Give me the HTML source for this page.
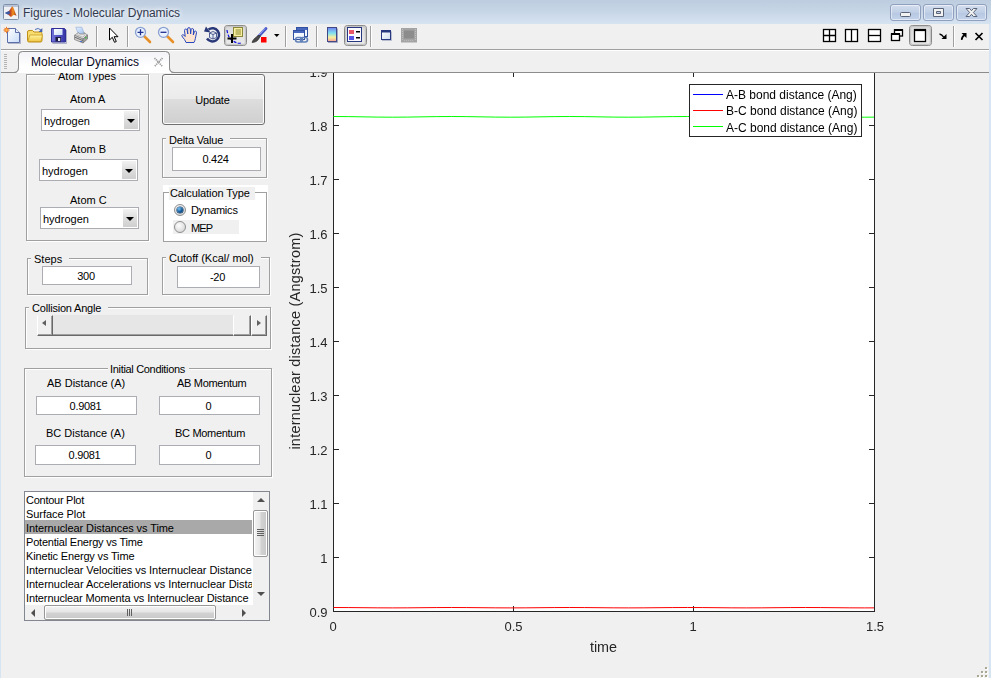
<!DOCTYPE html>
<html><head><meta charset="utf-8"><title>Figures - Molecular Dynamics</title>
<style>
html,body{margin:0;padding:0;}
body{width:991px;height:678px;overflow:hidden;position:relative;background:#f0f0f0;font-family:"Liberation Sans",sans-serif;font-size:11px;color:#000;}
.abs{position:absolute;}
#titlebar{left:0;top:0;width:991px;height:24px;background:linear-gradient(#bdccde,#c6d5e6 45%,#d6e3f1);}
#title{left:23px;top:6px;color:#323a50;font-size:12px;letter-spacing:-0.06px;text-shadow:0 0 4px #fff,0 0 6px #fff;white-space:nowrap;}
.wbtn{top:4px;height:15px;width:29px;border:1px solid #8f9fbd;border-radius:3px;background:linear-gradient(#d3deee,#c0cfe6 50%,#b6c7e2 51%,#c3d3ea);box-shadow:inset 0 0 0 1px rgba(255,255,255,.5);}
#frameL{left:0;top:24px;width:1px;height:654px;background:#d7e4f2;}
#frameR{left:989px;top:24px;width:2px;height:654px;background:#d7e4f2;}
#toolbar{left:1px;top:24px;width:988px;height:25px;background:#f0f0f0;}
#tbline{left:1px;top:49px;width:988px;height:1px;background:#a0a0a0;}
#tabbar{left:1px;top:50px;width:988px;height:22px;background:#f0f0f0;}
#tabline{left:1px;top:72px;width:988px;height:1px;background:#8c8c8c;}
.sep{top:28px;width:1px;height:19px;background:#a0a0a0;}
.lbl{white-space:nowrap;font-size:11px;line-height:13px;margin-top:1px;}
.panel{border:1px solid #a0a0a0;box-shadow:1px 1px 0 #fff, inset 1px 1px 0 #fff;box-sizing:border-box;}
.ptitle{background:#f0f0f0;white-space:nowrap;font-size:11px;line-height:13px;padding:0 7px 0 3px;margin-top:1px;}
.edit{background:#fff;border:1px solid #abadb3;box-sizing:border-box;text-align:center;font-size:11px;line-height:16px;letter-spacing:-0.3px;padding-right:2px;}
.combo{background:#fff;border:1px solid #abadb3;box-sizing:border-box;font-size:11px;}
.combo .arr{position:absolute;right:1px;top:1px;bottom:1px;width:14px;background:linear-gradient(#f2f2f2,#ddd 50%,#cfcfcf);}
.combo .arr:after{content:"";position:absolute;left:3px;top:8px;border:4px solid transparent;border-top:4px solid #000;border-bottom:none;}
.combo span{position:absolute;left:2px;top:5px;line-height:13px;}

.radio{width:12px;height:12px;border-radius:50%;box-sizing:border-box;border:1px solid #8e8f8f;background:radial-gradient(circle at 40% 35%,#fdfdfd,#dcdcdc 70%,#c9c9c9);}
.radio.on:after{content:"";position:absolute;left:2px;top:2px;width:6px;height:6px;border-radius:50%;background:radial-gradient(circle at 35% 30%,#7cc4f2,#17609f 50%,#08284e);box-shadow:0 0 0 .6px #143f70;}
.sbtn{background:#f0f0f0;box-sizing:border-box;border-right:1px solid #696969;border-bottom:1px solid #696969;border-top:1px solid #f0f0f0;border-left:1px solid #fff;box-shadow:inset -1px -1px 0 #a0a0a0;}
.sbtn i{position:absolute;top:4px;border:3.5px solid transparent;}
.sbtn i.tl{left:4px;border-right:4px solid #606060;border-left:none;}
.sbtn i.tr{left:5px;border-left:4px solid #606060;border-right:none;}
.li{height:14px;line-height:14px;font-size:11px;white-space:nowrap;padding-left:1px;}
.li.sel{background:#a9a9a9;box-shadow:0 -1px 0 #a9a9a9;height:13px;margin-bottom:1px;}
</style></head><body>
<div id="titlebar" class="abs"></div>
<div id="title" class="abs">Figures - Molecular Dynamics</div>
<div class="abs wbtn" style="left:890px"></div>
<div class="abs wbtn" style="left:923px"></div>
<div class="abs wbtn" style="left:956px"></div>
<div id="toolbar" class="abs"></div>
<div id="tbline" class="abs"></div>
<div id="tabbar" class="abs"></div>
<div id="tabline" class="abs"></div>
<div id="frameL" class="abs"></div>
<div id="frameR" class="abs"></div>
<svg class="abs" id="topsvg" style="left:0;top:0" width="991" height="73" viewBox="0 0 991 73">
<defs>
<linearGradient id="gPaper" x1="0" y1="0" x2="1" y2="1"><stop offset="0" stop-color="#ffffff"/><stop offset="1" stop-color="#c8dcf8"/></linearGradient>
<linearGradient id="gFolder" x1="0" y1="0" x2="0" y2="1"><stop offset="0" stop-color="#fff3a0"/><stop offset="1" stop-color="#f0c848"/></linearGradient>
<linearGradient id="gCbar" x1="0" y1="0" x2="0" y2="1"><stop offset="0" stop-color="#7080f0"/><stop offset="0.4" stop-color="#80e0f0"/><stop offset="0.7" stop-color="#f8f0a0"/><stop offset="1" stop-color="#f8a090"/></linearGradient>
<linearGradient id="gWin" x1="0" y1="0" x2="1" y2="1"><stop offset="0" stop-color="#ffffff"/><stop offset="1" stop-color="#d0dcf0"/></linearGradient>
<linearGradient id="gTab" x1="0" y1="0" x2="0" y2="1"><stop offset="0" stop-color="#f3f3f8"/><stop offset="0.7" stop-color="#ffffff"/><stop offset="1" stop-color="#ffffff"/></linearGradient>
<linearGradient id="gSel" x1="0" y1="0" x2="0" y2="1"><stop offset="0" stop-color="#dadada"/><stop offset="1" stop-color="#ececec"/></linearGradient>
<linearGradient id="gLogo" x1="0" y1="0" x2="1" y2="0"><stop offset="0" stop-color="#3050a0"/><stop offset="0.45" stop-color="#c04020"/><stop offset="0.7" stop-color="#f09020"/><stop offset="1" stop-color="#a03010"/></linearGradient>
<linearGradient id="gSave" x1="0" y1="0" x2="1" y2="0"><stop offset="0" stop-color="#7474dc"/><stop offset="1" stop-color="#3434a8"/></linearGradient><linearGradient id="gPaperB" x1="0" y1="0" x2="1" y2="1"><stop offset="0" stop-color="#e8f2ff"/><stop offset="1" stop-color="#9cc0f0"/></linearGradient>
</defs>
<!-- title icon -->
<g id="ticon">
<rect x="3.5" y="4.5" width="15" height="15" rx="1" fill="#eef0f4" stroke="#8090a8"/>
<rect x="4" y="5" width="14" height="2" fill="#b8c4d8"/>
<path d="M5 13 L9 11 L12 6.5 Q13 6 13.5 8 L16.5 16 Q15 14.5 13.5 15 L11 17 L8 14.5 Z" fill="url(#gLogo)"/>
<path d="M5 13 L9 11 L10.5 13 L8 14.5 Z" fill="#3a5aa8"/>
</g>
<!-- window buttons glyphs -->
<g id="wglyph" stroke="#5a6478" stroke-width="1" fill="#f2f2f2">
<rect x="900.5" y="12.5" width="10" height="4" rx="1"/>
<path d="M933.5 8.500h10v8h-10z M936.500 11.500v2h4v-2z" fill-rule="evenodd"/>
<path d="M966 8.500h3.600l1.900 2.200l1.900-2.200h3.600l-3.600 4l3.600 4h-3.600l-1.900-2.200l-1.900 2.200h-3.600l3.600-4z"/>
</g>
<!-- toolbar icons -->
<g id="tbicons">
<!-- new -->
<path d="M7.500 28.500h8l4 4v10h-12z" fill="url(#gPaper)" stroke="#5c6eaa"/>
<path d="M15.500 28.500v4h4" fill="#e8f0ff" stroke="#5c6eaa"/>
<path d="M8 43.500h12M20.500 33v11" stroke="#8890b0" stroke-width="1" fill="none" opacity=".6"/>
<g stroke="#e87828" stroke-width=".9"><path d="M6.500 26.800v6.400M3.300 30h6.400M4.300 27.800l4.400 4.400M8.700 27.800l-4.400 4.400"/></g>
<circle cx="6.500" cy="30" r="1.700" fill="#ffb848" stroke="#e86818" stroke-width=".7"/>
<!-- open -->
<path d="M27.500 40.500v-8.500q0-1.500 1.500-1.500h3.500l1.500 1.500h6.500q1.500 0 1.500 1.500v7q0 1.500-1.500 1.500h-11.500q-1.500 0-1.500-1.500z" fill="#f8dc70" stroke="#c09018"/>
<path d="M28 41l1.800-6h12.700l-1.500 6.500h-12z" fill="url(#gFolder)" stroke="#c89c20" stroke-width=".8"/>
<path d="M35 29.500q3.200-2.300 6 .5" fill="none" stroke="#5070b8" stroke-width="1"/>
<path d="M42.300 28v4h-3.600z" fill="#4060a8"/>
<!-- save -->
<path d="M51.500 28.500h13l1 1v12.500h-14z" fill="url(#gSave)" stroke="#303098"/>
<rect x="54" y="29" width="8.500" height="6" fill="url(#gPaper)"/>
<rect x="55.500" y="37" width="5.500" height="4.500" fill="#1c1c40"/>
<rect x="58" y="38" width="2.200" height="3" fill="#e8e8f4"/>
<path d="M66.500 30v13.500h-14" stroke="#7880a8" fill="none" opacity=".55"/>
<!-- print -->
<path d="M75.800 27.200h6l2.400 6.300h-6z" fill="url(#gPaperB)" stroke="#9ab0d8" stroke-width=".7"/>
<path d="M74.500 35.300l4-2.800l1 1.500h5l-.6-1.500l3.600 2.500l-4.500 4z" fill="#e6e6e6" stroke="#8c8c8c" stroke-width=".8"/>
<path d="M74.500 35.300l8.500 3.700v4l-8.500-3.500z" fill="#d0d0d0" stroke="#808080" stroke-width=".8"/>
<path d="M83 39l4.500-4v4l-4.500 4z" fill="#a0a0a0" stroke="#787878" stroke-width=".8"/>
<path d="M75 37.300l8 3.400" stroke="#6c6c6c" stroke-width="1"/>
<path d="M77 34.800l5.500 2.400l3-2.400" stroke="#a8a8a8" stroke-width=".8" fill="none"/>
<rect x="85" y="37" width="1.500" height="1.500" fill="#40c040"/>
<rect x="80" y="41" width="2" height="1" fill="#5070d0"/>
<!-- separators -->
<g fill="#a0a0a0"><rect x="96" y="26" width="1" height="21"/><rect x="127" y="26" width="1" height="21"/><rect x="285" y="26" width="1" height="21"/><rect x="316" y="26" width="1" height="21"/><rect x="370" y="26" width="1" height="21"/><rect x="953" y="26" width="1" height="21"/></g>
<g fill="#ffffff"><rect x="97" y="26" width="1" height="21"/><rect x="128" y="26" width="1" height="21"/><rect x="286" y="26" width="1" height="21"/><rect x="317" y="26" width="1" height="21"/><rect x="371" y="26" width="1" height="21"/><rect x="954" y="26" width="1" height="21"/></g>
<!-- pointer -->
<path d="M109.500 28v12l2.800-2.700l2.200 5l1.800-.8l-2.200-4.800h3.900z" fill="#fff" stroke="#000" stroke-width="1"/>
<!-- zoom in -->
<path d="M144 36l6 6" stroke="#e89028" stroke-width="2.600" stroke-linecap="round"/>
<circle cx="140.500" cy="32.300" r="5" fill="#eaf2ff" stroke="#8aa0d0" stroke-width="1.300"/>
<path d="M137.500 32.300h6M140.500 29.300v6" stroke="#203090" stroke-width="1.300"/>
<!-- zoom out -->
<path d="M167 36l6 6" stroke="#e89028" stroke-width="2.600" stroke-linecap="round"/>
<circle cx="163.500" cy="32.300" r="5" fill="#eaf2ff" stroke="#8aa0d0" stroke-width="1.300"/>
<path d="M160.500 32.300h6" stroke="#203090" stroke-width="1.300"/>
<!-- hand -->
<path d="M186 42.500q-1-3-3.500-5.500q-1.500-1.800 0-2.300q1.300-.3 2.700 1.800l-.7-6q0-1.500 1.200-1.500t1.500 1.500l.6 3.500l-.2-5q0-1.400 1.300-1.400t1.400 1.400l.3 5l.5-4.300q.2-1.300 1.300-1.200t1.200 1.500l-.3 5l1-3q.4-1.200 1.400-.9t.8 1.600q-.8 4-1.200 6t-1.300 3.800z" fill="#fde4d0" stroke="#2848c0" stroke-width="1"/>
<!-- rotate -->
<path d="M208.500 29.500a6.600 6.600 0 1 1-1.500 9" fill="none" stroke="#283878" stroke-width="2.500"/>
<path d="M204 31.500l6.500 1l-4.500-6z" fill="#283878"/>
<path d="M209.500 33l3.500-1.500l3.500 1.500v4.500l-3.500 1.500l-3.500-1.500z M209.500 33l3.500 1.500l3.500-1.500M213 34.500v4.500" fill="#e8eef8" stroke="#405088" stroke-width=".9"/>
<!-- datacursor (selected) -->
<rect x="224.500" y="25.500" width="22" height="20" rx="3" fill="url(#gSel)" stroke="#787878"/><rect x="225.500" y="26.500" width="20" height="18" rx="2" fill="none" stroke="#c6c6c6" stroke-width="1.400"/>
<path d="M227 30q1 8 6 11t8 2" fill="none" stroke="#1010e0" stroke-width="1.200" stroke-dasharray="3 1.500"/>
<rect x="233.500" y="27.500" width="9" height="9" fill="#f8f0a0" stroke="#8a8838"/>
<path d="M235.500 30h5.500M235.500 32h5.500M235.500 34h5.500" stroke="#8a8838" stroke-width="1"/>
<path d="M227.500 38.500h9M232 34v9" stroke="#000" stroke-width="2"/>
<!-- brush -->
<path d="M266 28.500l-7.500 8" stroke="#4858c8" stroke-width="2.800" stroke-linecap="round"/>
<path d="M265 28.500l-6 6.500" stroke="#a8b8f8" stroke-width=".9"/>
<path d="M259.500 35l-2 1l-3 2.500q-2 2-2.500 4q3 0 5-1.500q2-2 3.500-5z" fill="#484848" stroke="#282828" stroke-width=".6"/>
<rect x="261" y="37" width="5.500" height="5.500" fill="#ff0000"/>
<path d="M274 34h5.500l-2.750 3z" fill="#000"/>
<!-- link -->
<rect x="296.500" y="27.500" width="11" height="9" fill="#f4f8ff" stroke="#3050a0"/>
<rect x="297" y="28" width="10" height="2" fill="#4868c0"/>
<rect x="293.500" y="30.500" width="11" height="9" fill="#f4f8ff" stroke="#3050a0"/>
<rect x="294" y="31" width="10" height="2" fill="#4868c0"/>
<rect x="295.500" y="37.500" width="7" height="4.500" rx="2.200" fill="none" stroke="#6080b8" stroke-width="1.600"/>
<rect x="300.500" y="37.500" width="7" height="4.500" rx="2.200" fill="none" stroke="#6080b8" stroke-width="1.600"/>
<!-- colorbar -->
<rect x="327.500" y="27.500" width="9" height="14" fill="url(#gCbar)" stroke="#404888"/>
<path d="M328 42.500h9.500v-14" stroke="#8088b0" fill="none" opacity=".7"/>
<!-- legend (selected) -->
<rect x="344.500" y="25.500" width="22" height="20" rx="3" fill="url(#gSel)" stroke="#787878"/><rect x="345.500" y="26.500" width="20" height="18" rx="2" fill="none" stroke="#c6c6c6" stroke-width="1.400"/>
<rect x="347.500" y="27.500" width="14" height="14" fill="#fafaff" stroke="#283880"/>
<rect x="349" y="30" width="5" height="4" fill="#e85868"/>
<rect x="349" y="36" width="5" height="4" fill="#5858e8"/>
<rect x="356" y="31" width="4" height="1.500" fill="#000"/>
<rect x="356" y="37" width="4" height="1.500" fill="#000"/>
<!-- window -->
<rect x="381.500" y="30.500" width="9" height="9" fill="url(#gWin)" stroke="#283880"/>
<rect x="381" y="30" width="10" height="2.500" fill="#283880"/>
<path d="M382 40.500h9.500v-9" stroke="#9098b8" fill="none" opacity=".6"/>
<!-- film (disabled) -->
<rect x="401" y="28" width="16" height="14.500" fill="#a4a4a4"/>
<rect x="404" y="30.500" width="10" height="8" fill="#8c8c8c"/>
<path d="M402.500 29v12M415.500 29v12" stroke="#c0c0c0" stroke-width="1" stroke-dasharray="1 1"/>
<path d="M404 40.500h10" stroke="#b8b8b8" stroke-width="1" stroke-dasharray="1 1"/>
<!-- right: layout icons -->
<g fill="#fff" stroke="#000" stroke-width="1.300">
<rect x="823.500" y="29.500" width="12" height="12"/>
<path d="M829.500 29.500v12M823.500 35.500h12" fill="none"/>
<rect x="845.500" y="29.500" width="12" height="12"/>
<path d="M851.500 29.500v12" fill="none"/>
<rect x="868.500" y="29.500" width="12" height="12"/>
<path d="M868.500 35.500h12" fill="none"/>
<rect x="894.500" y="30" width="8" height="6"/>
<path d="M894 30h9" stroke-width="2"/>
<rect x="891.500" y="34" width="8" height="6.500"/>
<path d="M891 34h9" stroke-width="2"/>
</g>
<rect x="909.500" y="25.500" width="22" height="20" rx="3" fill="url(#gSel)" stroke="#787878"/><rect x="910.500" y="26.500" width="20" height="18" rx="2" fill="none" stroke="#c6c6c6" stroke-width="1.400"/>
<rect x="914.500" y="30" width="11" height="11.500" fill="#fff" stroke="#000" stroke-width="1.300"/>
<path d="M914 30h12" stroke="#000" stroke-width="2.200"/>
<!-- arrows -->
<path d="M939.500 34q2.500 .3 4.500 3.500" fill="none" stroke="#000" stroke-width="1.400"/>
<path d="M946.500 34v5h-5z" fill="#000"/>
<path d="M961.800 39.800q-.3-2.500 2.700-4.800" fill="none" stroke="#000" stroke-width="1.800"/>
<path d="M961.500 33h5v5z" fill="#000"/>
<path d="M975.500 33l7 7M982.500 33l-7 7" stroke="#000" stroke-width="1.700"/>
</g>
<!-- tab -->
<rect x="1" y="50" width="988" height="1" fill="#fff"/>
<path d="M1 72.500H14Q18.500 72.500 18.500 68V55.500Q18.500 51.500 22.500 51.500H165.500Q169.500 51.500 169.500 55.500V68Q169.500 72.500 174 72.500H989" fill="none" stroke="#8c8c8c" stroke-width="1"/>
<path d="M14 73Q18.500 73 18.500 68V55.500Q18.500 51.500 22.500 51.500H165.500Q169.500 51.500 169.500 55.500V68Q169.500 73 174 73z" fill="url(#gTab)"/>
<path d="M1 72.500H14Q18.500 72.500 18.500 68V55.500Q18.500 51.500 22.500 51.500H165.500Q169.500 51.500 169.500 55.500V68Q169.500 72.500 174 72.500H989" fill="none" stroke="#8c8c8c" stroke-width="1"/>
<g fill="#b4b4b4"><rect x="4" y="54" width="3" height="1"/><rect x="4" y="56" width="3" height="1"/><rect x="4" y="58" width="3" height="1"/><rect x="4" y="60" width="3" height="1"/><rect x="4" y="62" width="3" height="1"/><rect x="4" y="64" width="3" height="1"/><rect x="4" y="66" width="3" height="1"/><rect x="4" y="68" width="3" height="1"/></g>
<text x="31" y="65.500" font-family="Liberation Sans, sans-serif" font-size="12px" fill="#08081c">Molecular Dynamics</text>
<path d="M154.500 58l8 8.500M162.500 58l-8 8.500" stroke="#9a9a9a" stroke-width="1.700" stroke-dasharray="1.200 .8"/>
</svg>

<!--TAB-->
<div class="abs" id="content" style="left:0;top:73px;width:991px;height:605px;overflow:hidden"><div class="abs" style="left:0;top:-73px;width:991px;height:678px">
<!-- Atom Types panel -->
<div class="abs panel" style="left:26px;top:74px;width:123px;height:167px"></div>
<div class="abs ptitle" style="left:55px;top:69px;padding:0 4px 0 3px">Atom Types</div>
<div class="abs lbl" style="left:70px;top:92px;">Atom A</div>
<div class="abs combo" style="left:41px;top:109px;width:99px;height:22px"><span>hydrogen</span><div class="arr"></div></div>
<div class="abs lbl" style="left:70px;top:142px;">Atom B</div>
<div class="abs combo" style="left:39px;top:159px;width:99px;height:22px"><span>hydrogen</span><div class="arr"></div></div>
<div class="abs lbl" style="left:70px;top:193px;">Atom C</div>
<div class="abs combo" style="left:40px;top:207px;width:99px;height:22px"><span>hydrogen</span><div class="arr"></div></div>
<!-- Update button -->
<div class="abs" id="update" style="left:162px;top:74px;width:103px;height:51px;box-sizing:border-box;border:1px solid #707070;border-radius:3px;background:linear-gradient(#f2f2f2,#ebebeb 48%,#dddddd 50%,#cfcfcf);box-shadow:inset 0 0 0 1px #fcfcfc;text-align:center;line-height:51px;font-size:11px;letter-spacing:-0.2px;padding-right:2px;">Update</div>
<!-- Delta Value -->
<div class="abs panel" style="left:162px;top:138px;width:105px;height:40px"></div>
<div class="abs ptitle" style="left:166px;top:133px;letter-spacing:-0.17px">Delta Value</div>
<div class="abs edit" style="left:172px;top:147px;width:89px;height:24px;line-height:22px;">0.424</div>
<!-- Calculation Type -->
<div class="abs" style="left:163px;top:185px;width:105px;height:57px;background:#fff"></div>
<div class="abs panel" style="left:163px;top:192px;width:104px;height:50px;box-shadow:none;border-color:#a0a0a0"></div>
<div class="abs ptitle" style="left:169px;top:186px;width:80px;padding:0 5px 0 1px;line-height:13px;letter-spacing:-0.08px">Calculation Type</div>
<div class="abs radio on" style="left:174px;top:204px;"></div>
<div class="abs lbl" style="left:191px;top:203px;letter-spacing:-0.2px">Dynamics</div>
<div class="abs" style="left:173px;top:220px;width:66px;height:14px;background:#f0f0f0"></div>
<div class="abs radio" style="left:174px;top:221px;"></div>
<div class="abs lbl" style="left:191px;top:221px;letter-spacing:-0.9px">MEP</div>
<!-- Steps -->
<div class="abs panel" style="left:27px;top:258px;width:121px;height:37px"></div>
<div class="abs ptitle" style="left:31px;top:252px;">Steps</div>
<div class="abs edit" style="left:42px;top:266px;width:90px;height:19px;line-height:18px;">300</div>
<!-- Cutoff -->
<div class="abs panel" style="left:162px;top:257px;width:108px;height:38px"></div>
<div class="abs ptitle" style="left:166px;top:251px;">Cutoff (Kcal/ mol)</div>
<div class="abs edit" style="left:177px;top:266px;width:83px;height:22px;line-height:20px;">-20</div>
<!-- Collision Angle -->
<div class="abs panel" style="left:25px;top:307px;width:246px;height:42px"></div>
<div class="abs ptitle" style="left:29px;top:301px;letter-spacing:-0.2px">Collision Angle</div>
<div class="abs" id="slider" style="left:37px;top:315px;width:230px;height:21px;background:#e6e6e6;box-shadow:inset 0 -1px 0 #696969,inset 0 -2px 0 #a0a0a0;">
  <div class="abs sbtn" style="left:0;top:0;width:16px;height:21px;"><i class="tl"></i></div>
  <div class="abs sbtn" style="left:196px;top:0;width:18px;height:21px;"></div>
  <div class="abs sbtn" style="left:214px;top:0;width:16px;height:21px;"><i class="tr"></i></div>
</div>
<!-- Initial Conditions -->
<div class="abs panel" style="left:24px;top:368px;width:248px;height:109px"></div>
<div class="abs ptitle" style="left:108px;top:362px;padding:0 4px 0 2px;letter-spacing:-0.32px">Initial Conditions</div>
<div class="abs lbl" style="left:47px;top:376px;">AB Distance (A)</div>
<div class="abs lbl" style="left:177px;top:376px;letter-spacing:-0.3px">AB Momentum</div>
<div class="abs edit" style="left:36px;top:396px;width:101px;height:19px;line-height:18px;">0.9081</div>
<div class="abs edit" style="left:159px;top:396px;width:101px;height:19px;line-height:18px;">0</div>
<div class="abs lbl" style="left:46px;top:426px;">BC Distance (A)</div>
<div class="abs lbl" style="left:175px;top:426px;letter-spacing:-0.3px">BC Momentum</div>
<div class="abs edit" style="left:35px;top:445px;width:101px;height:20px;line-height:18px;">0.9081</div>
<div class="abs edit" style="left:159px;top:445px;width:101px;height:20px;line-height:18px;">0</div>
<!-- Listbox -->
<div class="abs" id="listbox" style="left:24px;top:491px;width:246px;height:130px;box-sizing:border-box;border:1px solid #828790;background:#fff;overflow:hidden;">
  <div class="abs" style="left:0;top:1px;width:227px;height:112px;overflow:hidden;">
    <div class="li" style="letter-spacing:-0.26px">Contour Plot</div>
    <div class="li" style="letter-spacing:-0.05px">Surface Plot</div>
    <div class="li sel" style="letter-spacing:-0.083px">Internuclear Distances vs Time</div>
    <div class="li" style="letter-spacing:-0.21px">Potential Energy vs Time</div>
    <div class="li" style="letter-spacing:-0.16px">Kinetic Energy vs Time</div>
    <div class="li" style="letter-spacing:-0.06px">Internuclear Velocities vs Internuclear Distances</div>
    <div class="li" style="letter-spacing:-0.05px">Internuclear Accelerations vs Internuclear Distances</div>
    <div class="li" style="letter-spacing:-0.124px">Internuclear Momenta vs Internuclear Distance</div>
  </div>
  <div class="abs" id="vscroll" style="left:228px;top:0;width:16px;height:113px;background:#f0f0f0;">
    <i class="abs" style="left:4px;top:6px;border:4px solid transparent;border-bottom:4px solid #505050;border-top:none;"></i>
    <div class="abs" style="left:0;top:18px;width:15px;height:47px;box-sizing:border-box;border:1px solid #979797;border-radius:2px;background:linear-gradient(90deg,#f4f4f4,#e6e6e6 45%,#d2d2d2 55%,#c8c8c8);box-shadow:inset 0 0 0 1px #fff;">
      <i class="abs" style="left:3px;top:18px;width:7px;height:1px;background:#606060;box-shadow:0 2px 0 #606060,0 4px 0 #606060,0 6px 0 #606060;"></i>
    </div>
    <i class="abs" style="left:4px;top:100px;border:4px solid transparent;border-top:4px solid #505050;border-bottom:none;"></i>
  </div>
  <div class="abs" id="hscroll" style="left:0;top:113px;width:244px;height:15px;background:#f0f0f0;">
    <i class="abs" style="left:6px;top:4px;border:4px solid transparent;border-right:4px solid #505050;border-left:none;"></i>
    <div class="abs" style="left:19px;top:0;width:172px;height:15px;box-sizing:border-box;border:1px solid #979797;border-radius:2px;background:linear-gradient(#f4f4f4,#e6e6e6 45%,#d2d2d2 55%,#c8c8c8);box-shadow:inset 0 0 0 1px #fff;">
      <i class="abs" style="left:82px;top:3px;width:1px;height:7px;background:#606060;box-shadow:2px 0 0 #606060,4px 0 0 #606060;"></i>
    </div>
    <i class="abs" style="left:217px;top:4px;border:4px solid transparent;border-left:4px solid #505050;border-right:none;"></i>
  </div>
</div>

</div></div>
<svg class="abs" id="plot" style="left:280px;top:73px;will-change:transform;" width="709" height="605" viewBox="280 73 709 605" font-family="Liberation Sans, sans-serif" shape-rendering="crispEdges">
<rect x="333" y="71" width="542" height="541" fill="#fff"/>
<g fill="#262626">
<rect x="333" y="71" width="1" height="541"/>
<rect x="874" y="71" width="1" height="541"/>
<rect x="333" y="611" width="542" height="1"/>
<!-- y ticks -->
<g id="yt"></g>
</g>
<rect x="334" y="611" width="5" height="1" fill="#262626"/><rect x="869" y="611" width="5" height="1" fill="#262626"/>
<rect x="334" y="557" width="5" height="1" fill="#262626"/><rect x="869" y="557" width="5" height="1" fill="#262626"/>
<rect x="334" y="503" width="5" height="1" fill="#262626"/><rect x="869" y="503" width="5" height="1" fill="#262626"/>
<rect x="334" y="449" width="5" height="1" fill="#262626"/><rect x="869" y="449" width="5" height="1" fill="#262626"/>
<rect x="334" y="395" width="5" height="1" fill="#262626"/><rect x="869" y="395" width="5" height="1" fill="#262626"/>
<rect x="334" y="341" width="5" height="1" fill="#262626"/><rect x="869" y="341" width="5" height="1" fill="#262626"/>
<rect x="334" y="287" width="5" height="1" fill="#262626"/><rect x="869" y="287" width="5" height="1" fill="#262626"/>
<rect x="334" y="233" width="5" height="1" fill="#262626"/><rect x="869" y="233" width="5" height="1" fill="#262626"/>
<rect x="334" y="179" width="5" height="1" fill="#262626"/><rect x="869" y="179" width="5" height="1" fill="#262626"/>
<rect x="334" y="125" width="5" height="1" fill="#262626"/><rect x="869" y="125" width="5" height="1" fill="#262626"/>
<rect x="334" y="71" width="5" height="1" fill="#262626"/><rect x="869" y="71" width="5" height="1" fill="#262626"/>
<rect x="513" y="606" width="1" height="5" fill="#262626"/><rect x="513" y="72" width="1" height="5" fill="#262626"/>
<rect x="693" y="606" width="1" height="5" fill="#262626"/><rect x="693" y="72" width="1" height="5" fill="#262626"/>
<g font-size="13px" fill="#262626" text-anchor="end" shape-rendering="auto">
<text x="327.5" y="616.5">0.9</text>
<text x="327.5" y="562.5">1</text>
<text x="327.5" y="508.5">1.1</text>
<text x="327.5" y="454.5">1.2</text>
<text x="327.5" y="400.5">1.3</text>
<text x="327.5" y="346.5">1.4</text>
<text x="327.5" y="292.5">1.5</text>
<text x="327.5" y="238.5">1.6</text>
<text x="327.5" y="184.5">1.7</text>
<text x="327.5" y="130.5">1.8</text>
<text x="327.5" y="76.5">1.9</text>
</g>
<g font-size="13px" fill="#262626" text-anchor="middle" shape-rendering="auto">
<text x="333" y="630.5">0</text>
<text x="513.5" y="630.5">0.5</text>
<text x="693" y="630.5">1</text>
<text x="875" y="630.5">1.5</text>
</g>
<text x="603.5" y="651.5" font-size="14.4px" fill="#262626" text-anchor="middle" shape-rendering="auto">time</text>
<text transform="translate(300.3,341) rotate(-90)" font-size="14.5px" letter-spacing="0.24" fill="#262626" text-anchor="middle" shape-rendering="auto">internuclear distance (Angstrom)</text>
<clipPath id="axclip"><rect x="333" y="71" width="541" height="541"/></clipPath>
<g shape-rendering="auto" fill="none" stroke-width="1" clip-path="url(#axclip)">
<path id="gline" stroke="#00ff00" d="M333.5,116.50 C355.0,116.50 371.0,117.20 392.5,117.20 C414.0,117.20 430.0,116.50 451.5,116.50 C473.0,116.50 489.0,117.20 510.5,117.20 C532.0,117.20 548.0,116.50 569.5,116.50 C591.0,116.50 607.0,117.20 628.5,117.20 C650.0,117.20 666.0,116.50 687.5,116.50 C709.0,116.50 725.0,117.20 746.5,117.20 C768.0,117.20 784.0,116.50 805.5,116.50 C827.0,116.50 843.0,117.20 864.5,117.20 C886.0,117.20 902.0,116.50 923.5,116.50"/>
<path id="rline" stroke="#ff0000" d="M333.5,607.50 C355.0,607.50 371.0,607.90 392.5,607.90 C414.0,607.90 430.0,607.50 451.5,607.50 C473.0,607.50 489.0,607.90 510.5,607.90 C532.0,607.90 548.0,607.50 569.5,607.50 C591.0,607.50 607.0,607.90 628.5,607.90 C650.0,607.90 666.0,607.50 687.5,607.50 C709.0,607.50 725.0,607.90 746.5,607.90 C768.0,607.90 784.0,607.50 805.5,607.50 C827.0,607.50 843.0,607.90 864.5,607.90 C886.0,607.90 902.0,607.50 923.5,607.50"/>
</g>
<g id="grip"><rect x="986" y="668" width="2" height="2" fill="#fff"/><rect x="985" y="667" width="2" height="2" fill="#aaa68f"/><rect x="982" y="672" width="2" height="2" fill="#fff"/><rect x="981" y="671" width="2" height="2" fill="#aaa68f"/><rect x="986" y="672" width="2" height="2" fill="#fff"/><rect x="985" y="671" width="2" height="2" fill="#aaa68f"/><rect x="978" y="676" width="2" height="2" fill="#fff"/><rect x="977" y="675" width="2" height="2" fill="#aaa68f"/><rect x="982" y="676" width="2" height="2" fill="#fff"/><rect x="981" y="675" width="2" height="2" fill="#aaa68f"/><rect x="986" y="676" width="2" height="2" fill="#fff"/><rect x="985" y="675" width="2" height="2" fill="#aaa68f"/></g>
<!-- legend -->
<rect x="689.5" y="84.5" width="172" height="52" fill="#fff" stroke="#262626" stroke-width="1"/>
<rect x="693" y="94" width="30" height="1" fill="#0000ff"/>
<rect x="693" y="110" width="30" height="1" fill="#ff0000"/>
<rect x="693" y="126" width="30" height="1" fill="#00ff00"/>
<g font-size="12px" fill="#000" shape-rendering="auto">
<text x="726" y="99">A-B bond distance (Ang)</text>
<text x="726" y="115">B-C bond distance (Ang)</text>
<text x="726" y="131.5">A-C bond distance (Ang)</text>
</g>
</svg>

</body></html>
